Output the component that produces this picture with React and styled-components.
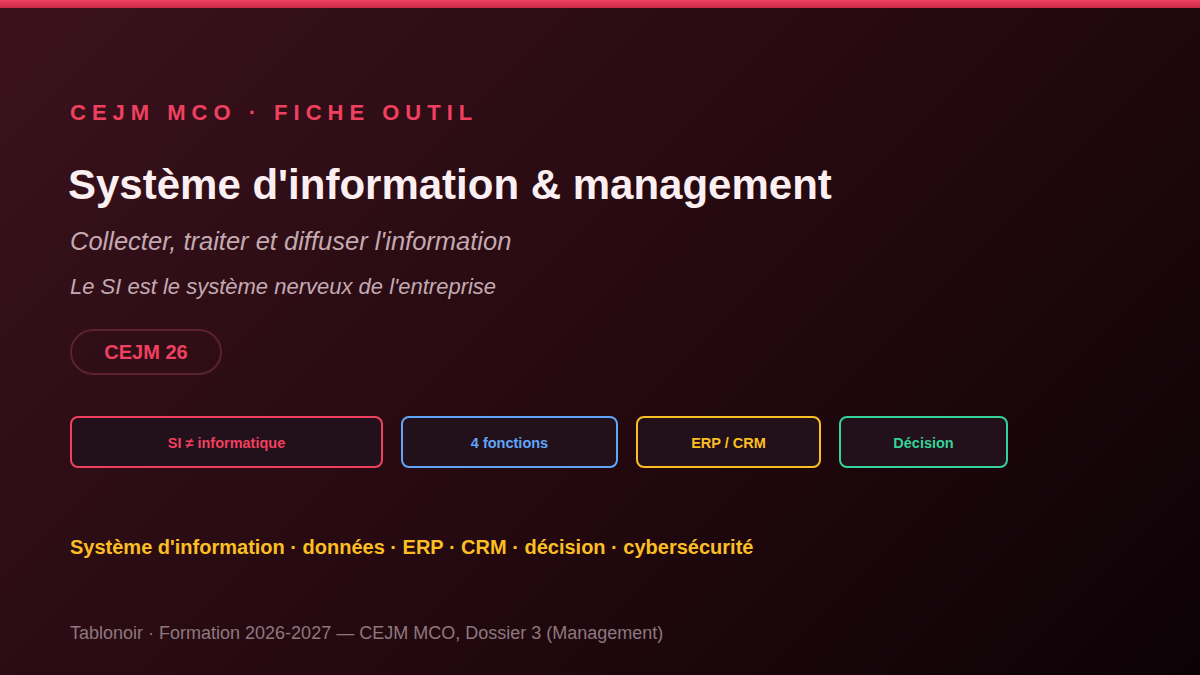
import React from "react";
import styled, { createGlobalStyle } from "styled-components";

const Global = createGlobalStyle`
  html, body { margin: 0; padding: 0; }
  body { font-family: "Liberation Sans", Arial, sans-serif; }
`;

const Page = styled.div`
  width: 1200px; height: 675px; overflow: hidden; box-sizing: border-box;
  background: linear-gradient(135deg, #3a121d 0%, #24090f 55%, #0c0205 100%);
  display: flex; flex-direction: column;
`;
const TopBar = styled.div`
  height: 8px; background: linear-gradient(180deg, #f0405f, #c92a48); flex-shrink: 0;
`;
const Content = styled.div`
  padding: 84px 70px 0; display: flex; flex-direction: column;
`;
const Kicker = styled.div`
  color: #f0405f; font-size: 22px; font-weight: bold; letter-spacing: 6px; line-height: 42px;
`;
const Title = styled.h1`
  margin: 25px 0 0 -2px; color: #fbeff2; font-size: 42px; font-weight: bold; line-height: 52px;
`;
const Subtitle = styled.div`
  margin-top: 13px; color: #c3aab1; font-size: 25.5px; font-style: italic; line-height: 34px;
`;
const Tagline = styled.div`
  margin-top: 15px; color: #c3aab1; font-size: 22px; font-style: italic; line-height: 28px;
`;
const Badge = styled.div`
  margin-top: 28px; align-self: flex-start; box-sizing: border-box;
  width: 152px; height: 46px; border-radius: 23px; border: 2px solid #5a2232;
  color: #f0405f; font-size: 20px; font-weight: bold;
  display: flex; align-items: center; justify-content: center;
`;
const Cards = styled.div`
  margin-top: 41px; display: flex; gap: 18px;
`;
const Card = styled.div`
  box-sizing: border-box; width: ${p => p.$w}px; height: 52px;
  border: 2px solid ${p => p.$c}; border-radius: 8px; background: #22101a;
  color: ${p => p.$c}; font-size: 14.5px; font-weight: bold;
  display: flex; align-items: center; justify-content: center; padding-top: 2px;
`;
const Keywords = styled.div`
  margin-top: 66px; color: #fbbf24; font-size: 20px; font-weight: bold; line-height: 26px;
`;
const Footer = styled.div`
  margin-top: 61px; color: #8e7880; font-size: 18px; line-height: 24px;
`;

export default function App() {
  return (
    <>
      <Global />
      <Page>
        <TopBar />
        <Content>
          <Kicker>CEJM MCO · FICHE OUTIL</Kicker>
          <Title>Système d'information &amp; management</Title>
          <Subtitle>Collecter, traiter et diffuser l'information</Subtitle>
          <Tagline>Le SI est le système nerveux de l'entreprise</Tagline>
          <Badge>CEJM 26</Badge>
          <Cards>
            <Card $w={313} $c="#f0405f">SI ≠ informatique</Card>
            <Card $w={217} $c="#60a5fa">4 fonctions</Card>
            <Card $w={185} $c="#fbbf24">ERP / CRM</Card>
            <Card $w={169} $c="#34d399">Décision</Card>
          </Cards>
          <Keywords>Système d'information · données · ERP · CRM · décision · cybersécurité</Keywords>
          <Footer>Tablonoir · Formation 2026-2027 — CEJM MCO, Dossier 3 (Management)</Footer>
        </Content>
      </Page>
    </>
  );
}
